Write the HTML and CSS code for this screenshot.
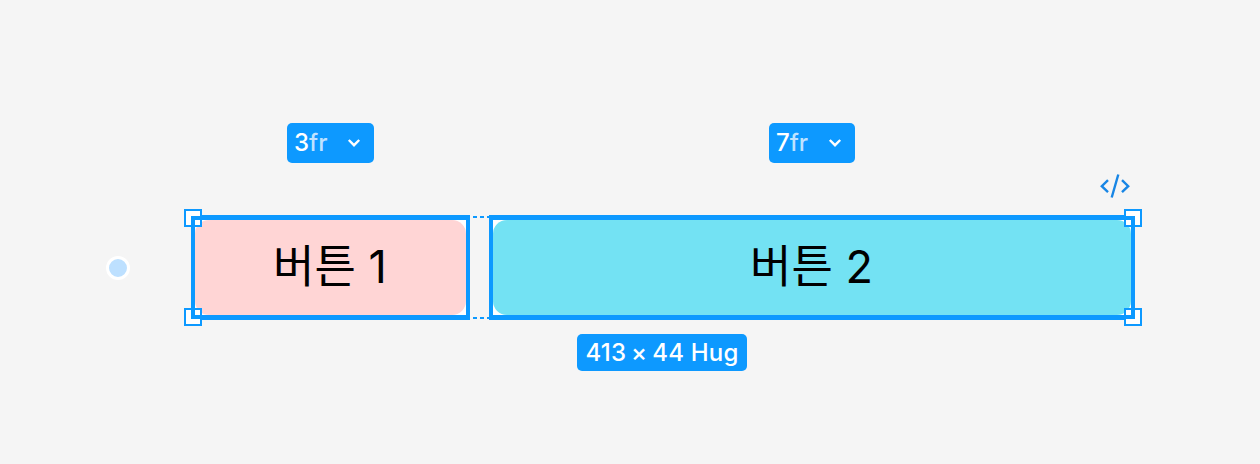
FILE: index.html
```
<!DOCTYPE html>
<html lang="ko">

<head>
  <meta charset="utf-8">
  <title>Grid 3fr 7fr</title>
  <link rel="stylesheet" href="styles.css">
</head>

<body>
  <div class="canvas">
    <div class="origin-dot"></div>

    <div class="frame">
      <!-- column sizes -->
      <div class="tracks">
        <div class="track"><span class="badge badge-3">3<span class="unit">fr</span>
          <svg class="chevron" width="14" height="10" viewBox="0 0 14 10"><path d="M1.8 2L7 7.2 12.2 2"/></svg></span></div>
        <div class="track"><span class="badge badge-7">7<span class="unit">fr</span>
          <svg class="chevron" width="14" height="10" viewBox="0 0 14 10"><path d="M1.8 2L7 7.2 12.2 2"/></svg></span></div>
      </div>

      <div class="dev-row">
        <svg class="code" width="32" height="26" viewBox="0 0 32 26"><path d="M9 7.2L2.8 13.2 9 19.2M23 7.2l6.2 6L23 19.2M19.3 1.5l-6.6 23"/></svg>
      </div>

      <div class="cells">
        <div class="cell"><div class="button pink"><span>버튼 1</span></div></div>
        <div class="gap"></div>
        <div class="cell"><div class="button cyan"><span>버튼 2</span></div></div>
        <i class="handle top-left"></i>
        <i class="handle top-right"></i>
        <i class="handle bottom-left"></i>
        <i class="handle bottom-right"></i>
      </div>

      <div class="size"><span class="size-label"><span class="numbers">413 × 44</span> Hug</span></div>
    </div>
  </div>
</body>

</html>
```

FILE: styles.css
```
:root {
  --blue: #0d99ff;
}

body {
  margin: 0;
  background-color: #f5f5f5;
  font-family: Inter, "Noto Sans CJK KR", sans-serif;
}

.canvas {
  display: flex;
  height: 464px;
  overflow: hidden;
}

.origin-dot {
  box-sizing: border-box;
  width: 24px;
  height: 24px;
  margin: 256px 61px 0 106px;
  border: 3px solid white;
  border-radius: 50%;
  background-color: #bde0ff;
}

.frame {
  width: 944px;
  padding-top: 123px;
}

.tracks,
.cells {
  display: grid;
}

.tracks {
  grid-template-columns: 279px 646px;
  column-gap: 19px;
}

.track {
  display: flex;
  justify-content: center;
}

.badge {
  box-sizing: border-box;
  display: flex;
  align-items: center;
  width: 87px;
  height: 40px;
  padding: 0 13px 2px 7px;
  border-radius: 5px;
  background-color: var(--blue);
  color: white;
  font-size: 24px;
  font-weight: 550;
}

.badge-7 {
  width: 86px;
}

.unit {
  color: #bfe2ff;
}

.chevron {
  margin: 2px 0 0 auto;
  fill: none;
  stroke: white;
  stroke-width: 2.4;
}

.dev-row {
  display: flex;
  justify-content: flex-end;
  height: 42px;
  padding: 10px 4px 0 0;
  box-sizing: border-box;
  margin-bottom: 10px;
}

.code {
  fill: none;
  stroke: #1886e5;
  stroke-width: 2.4;
}

.cells {
  position: relative;
  grid-template-columns: 279px 19px 646px;
  height: 105px;
}

.cell {
  border: solid var(--blue);
  border-width: 5px 4px;
  background-color: white;
}

.button {
  box-sizing: border-box;
  display: flex;
  align-items: center;
  justify-content: center;
  height: 100%;
  padding: 0 1px 8px 0;
  border-radius: 14px;
  color: black;
  font-size: 45px;
}

.pink {
  background-color: #ffd5d5;
}

.cyan {
  background-color: #73e2f3;
}

.gap {
  margin: 1px 0;
  background:
    repeating-linear-gradient(90deg, transparent 0 3px, var(--blue) 3px 7px) top / 100% 2px no-repeat,
    repeating-linear-gradient(90deg, transparent 0 3px, var(--blue) 3px 7px) bottom / 100% 2px no-repeat;
}

/* corner handles, the frame edge shows through each one */
.handle {
  position: absolute;
  box-sizing: border-box;
  width: 18px;
  height: 18px;
  border: 2px solid var(--blue);
  background-color: white;
}

.handle::after {
  content: '';
  position: absolute;
  width: 5px;
  height: 5px;
  border: 0 solid var(--blue);
}

.top-left {
  left: -7px;
  top: -6px;
}

.top-left::after {
  right: 0;
  bottom: 0;
  border-width: 4px 0 0 4px;
}

.top-right {
  right: -7px;
  top: -6px;
}

.top-right::after {
  left: 0;
  bottom: 0;
  border-width: 4px 4px 0 0;
}

.bottom-left {
  left: -7px;
  bottom: -6px;
}

.bottom-left::after {
  right: 0;
  top: 0;
  border-width: 0 0 4px 4px;
}

.bottom-right {
  right: -7px;
  bottom: -6px;
}

.bottom-right::after {
  left: 0;
  top: 0;
  border-width: 0 4px 4px 0;
}

.size {
  display: flex;
  justify-content: center;
  padding: 14px 2px 0 0;
}

.size-label {
  width: 170px;
  height: 37px;
  border-radius: 5px;
  background-color: var(--blue);
  color: white;
  font-size: 24px;
  font-weight: 550;
  line-height: 37px;
  letter-spacing: 0.2px;
  text-align: center;
  white-space: nowrap;
}

.numbers {
  word-spacing: -1.7px;
}
```
